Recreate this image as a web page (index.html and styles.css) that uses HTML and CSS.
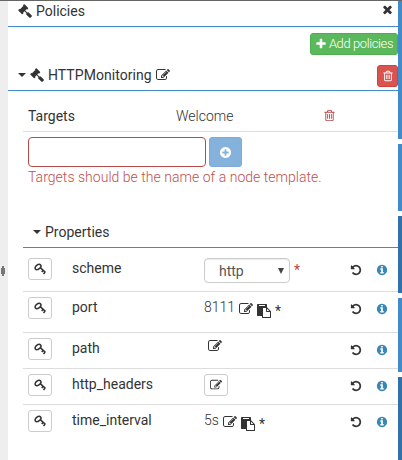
FILE: index.html
```html
<!DOCTYPE html>
<html lang="en">
<head>
<meta charset="utf-8">
<title>Policies</title>
<link rel="stylesheet" href="styles.css">
</head>
<body>
<svg class="defs" aria-hidden="true">
<symbol id="trash" viewBox="0 0 1792 1792"><path d="M704 736v576q0 14-9 23t-23 9h-64q-14 0-23-9t-9-23v-576q0-14 9-23t23-9h64q14 0 23 9t9 23zm256 0v576q0 14-9 23t-23 9h-64q-14 0-23-9t-9-23v-576q0-14 9-23t23-9h64q14 0 23 9t9 23zm256 0v576q0 14-9 23t-23 9h-64q-14 0-23-9t-9-23v-576q0-14 9-23t23-9h64q14 0 23 9t9 23zm128 724v-948h-896v948q0 22 7 40.5t14.5 27 10.5 8.5h832q3 0 10.5-8.5t14.5-27 7-40.5zm-672-1076h448l-48-117q-7-9-17-11h-317q-10 2-17 11zm928 32v64q0 14-9 23t-23 9h-96v948q0 83-47 143.5t-113 60.5h-832q-66 0-113-58.5t-47-141.5v-952h-96q-14 0-23-9t-9-23v-64q0-14 9-23t23-9h309l70-167q15-37 54-63t79-26h320q40 0 79 26t54 63l70 167h309q14 0 23 9t9 23z"/></symbol>
<symbol id="edit" viewBox="0 0 1792 1792"><path d="M888 1184l116-116-152-152-116 116v56h96v96h56zm440-720q-16-16-33 1l-350 350q-17 17-1 33t33-1l350-350q17-17 1-33zm80 594v190q0 119-84.5 203.5t-203.5 84.5h-832q-119 0-203.5-84.5t-84.5-203.5v-832q0-119 84.5-203.5t203.5-84.5h832q63 0 117 25 15 7 18 23 3 17-9 29l-49 49q-14 14-32 8-23-6-45-6h-832q-66 0-113 47t-47 113v832q0 66 47 113t113 47h832q66 0 113-47t47-113v-126q0-13 9-22l64-64q15-15 35-7t20 29zm-96-738l288 288-672 672h-288v-288zm444 132l-92 92-288-288 92-92q28-28 68-28t68 28l152 152q28 28 28 68t-28 68z"/></symbol>
<symbol id="gavel" viewBox="0 0 1792 1792"><path d="M1771 1536q0 53-37 90l-107 108q-39 37-91 37-53 0-90-37l-363-364q-38-36-38-90 0-53 43-96l-256-256-126 126q-14 14-34 14t-34-14q2 2 12.5 12t12.5 13 10 11.5 10 13.5 6 13.5 5.5 16.5 1.5 18q0 38-28 68-3 3-16.5 18t-19 20.5-18.5 16.5-22 15.5-22 9-26 4.5q-40 0-68-28l-408-408q-28-28-28-68 0-13 4.5-26t9-22 15.5-22 16.5-18.5 20.5-19 18-16.5q30-28 68-28 10 0 18 1.5t16.5 5.5 13.5 6 13.5 10 11.5 10 13 12.5 12 12.5q-14-14-14-34t14-34l348-348q14-14 34-14t34 14q-2-2-12.5-12t-12.5-13-10-11.5-10-13.5-6-13.5-5.5-16.5-1.5-18q0-38 28-68 3-3 16.5-18t19-20.5 18.5-16.5 22-15.5 22-9 26-4.5q40 0 68 28l408 408q28 28 28 68 0 13-4.5 26t-9 22-15.5 22-16.5 18.5-20.5 19-18 16.5q-30 28-68 28-10 0-18-1.5t-16.5-5.5-13.5-6-13.5-10-11.5-10-13-12.5-12-12.5q14 14 14 34t-14 34l-126 126 256 256q43-43 96-43 52 0 91 37l363 363q37 39 37 91z"/></symbol>
<symbol id="plus" viewBox="0 0 1792 1792"><path d="M1600 736v192q0 40-28 68t-68 28h-416v416q0 40-28 68t-68 28h-192q-40 0-68-28t-28-68v-416h-416q-40 0-68-28t-28-68v-192q0-40 28-68t68-28h416v-416q0-40 28-68t68-28h192q40 0 68 28t28 68v416h416q40 0 68 28t28 68z"/></symbol>
<symbol id="times" viewBox="0 0 1792 1792"><path d="M1490 1322q0 40-28 68l-136 136q-28 28-68 28t-68-28l-294-294-294 294q-28 28-68 28t-68-28l-136-136q-28-28-28-68t28-68l294-294-294-294q-28-28-28-68t28-68l136-136q28-28 68-28t68 28l294 294 294-294q28-28 68-28t68 28l136 136q28 28 28 68t-28 68l-294 294 294 294q28 28 28 68z"/></symbol>
<symbol id="plus-circle" viewBox="0 0 1792 1792"><path d="M1344 960v-128q0-26-19-45t-45-19h-256v-256q0-26-19-45t-45-19h-128q-26 0-45 19t-19 45v256h-256q-26 0-45 19t-19 45v128q0 26 19 45t45 19h256v256q0 26 19 45t45 19h128q26 0 45-19t19-45v-256h256q26 0 45-19t19-45zm320-64q0 209-103 385.5t-279.5 279.5-385.5 103-385.5-103-279.5-279.5-103-385.5 103-385.5 279.5-279.5 385.5-103 385.5 103 279.5 279.5 103 385.5z"/></symbol>
<symbol id="info" viewBox="0 0 1792 1792"><path d="M1152 1376v-160q0-14-9-23t-23-9h-96v-512q0-14-9-23t-23-9h-320q-14 0-23 9t-9 23v160q0 14 9 23t23 9h96v320h-96q-14 0-23 9t-9 23v160q0 14 9 23t23 9h448q14 0 23-9t9-23zm-128-896v-160q0-14-9-23t-23-9h-192q-14 0-23 9t-9 23v160q0 14 9 23t23 9h192q14 0 23-9t9-23zm640 416q0 209-103 385.5t-279.5 279.5-385.5 103-385.5-103-279.5-279.5-103-385.5 103-385.5 279.5-279.5 385.5-103 385.5 103 279.5 279.5 103 385.5z"/></symbol>
<symbol id="undo" viewBox="0 0 1792 1792"><path d="M1664 896q0 156-61 298t-164 245-245 164-298 61q-172 0-327-72.5t-264-204.5q-7-10-6.5-22.5t8.5-20.5l137-138q10-9 25-9 16 2 23 12 73 95 179 147t225 52q104 0 198.5-40.5t163.5-109.5 109.5-163.5 40.5-198.5-40.5-198.5-109.5-163.5-163.5-109.5-198.5-40.5q-98 0-188 35.5t-160 101.5l137 138q31 30 14 69-17 40-59 40h-448q-26 0-45-19t-19-45v-448q0-42 40-59 39-17 69 14l130 129q107-101 244.5-156.5t284.5-55.5q156 0 298 61t245 164 164 245 61 298z"/></symbol>
<symbol id="paste" viewBox="0 0 1792 1792"><path d="M768 1664h896v-640h-416q-40 0-68-28t-28-68v-416h-384v1152zm256-1440v-64q0-13-9.5-22.5t-22.5-9.5h-704q-13 0-22.5 9.5t-9.5 22.5v64q0 13 9.5 22.5t22.5 9.5h704q13 0 22.5-9.5t9.5-22.5zm256 672h299l-299-299v299zm512 128v672q0 40-28 68t-68 28h-960q-40 0-68-28t-28-68v-160h-544q-40 0-68-28t-28-68v-1344q0-40 28-68t68-28h1088q40 0 68 28t28 68v328q21 13 36 28l408 408q28 28 48 76t20 88z"/></symbol>
<symbol id="key" viewBox="0 0 12 12"><g fill="none" stroke="currentColor"><ellipse cx="4" cy="4" rx="3.3" ry="2.1" transform="rotate(-38 4 4)" stroke-width="1.5"/><path d="M6.2 4.6L11.4 9.4M7.7 9l1.7-1.9M9.5 10.9l1.7-2" stroke-width="1.5"/></g></symbol>
</svg>
<div class="app">
  <div class="gutter"><svg class="grip" viewBox="0 0 6 10"><path d="M2 0h2v10H2zM1 2h4v6H1z"/></svg></div>
  <main class="panel">
    <header class="bar title"><svg class="i"><use href="#gavel"/></svg><span>Policies</span><svg class="i close"><use href="#times"/></svg></header>
    <div class="actions"><button class="btn add"><svg class="i"><use href="#plus"/></svg><span>Add policies</span></button></div>
    <div class="bar policy"><i class="caret"></i><svg class="i"><use href="#gavel"/></svg><span class="pname">HTTPMonitoring</span><svg class="i"><use href="#edit"/></svg><button class="btn del"><svg class="i"><use href="#trash"/></svg></button></div>
    <section class="body">
      <div class="targets"><span class="label">Targets</span><span class="light">Welcome</span><svg class="i red"><use href="#trash"/></svg></div>
      <div class="entry"><input class="field" type="text" aria-label="Target"><button class="btn plus"><svg class="i"><use href="#plus-circle"/></svg></button></div>
      <p class="error">Targets should be the name of a node template.</p>
      <div class="bar props"><i class="caret"></i><span>Properties</span></div>
      <div class="row r1"><button class="btn key"><svg><use href="#key"/></svg></button><span class="name">scheme</span><span class="val"><span class="select"><span>http</span><i class="arrow"></i></span><b class="star req">*</b></span><svg class="i"><use href="#undo"/></svg><svg class="i info"><use href="#info"/></svg></div>
      <div class="row r2"><button class="btn key"><svg><use href="#key"/></svg></button><span class="name">port</span><span class="val"><span class="light">8111</span><svg class="i ed"><use href="#edit"/></svg><svg class="i cp"><use href="#paste"/></svg><b class="star">*</b></span><svg class="i"><use href="#undo"/></svg><svg class="i info"><use href="#info"/></svg></div>
      <div class="row r3"><button class="btn key"><svg><use href="#key"/></svg></button><span class="name">path</span><span class="val"><svg class="i ed lone"><use href="#edit"/></svg></span><svg class="i"><use href="#undo"/></svg><svg class="i info"><use href="#info"/></svg></div>
      <div class="row r4"><button class="btn key"><svg><use href="#key"/></svg></button><span class="name">http_headers</span><span class="val"><button class="btn key"><svg class="pen"><use href="#edit"/></svg></button></span><svg class="i"><use href="#undo"/></svg><svg class="i info"><use href="#info"/></svg></div>
      <div class="row r5"><button class="btn key"><svg><use href="#key"/></svg></button><span class="name">time_interval</span><span class="val"><span class="light">5s</span><svg class="i ed"><use href="#edit"/></svg><svg class="i cp"><use href="#paste"/></svg><b class="star">*</b></span><svg class="i"><use href="#undo"/></svg><svg class="i info"><use href="#info"/></svg></div>
    </section>
  </main>
  <aside class="tabs"><i class="t1"></i><i class="t2"></i><i class="t3 dark"></i><i class="t4"></i><i class="t5 dark"></i></aside>
</div>
</body>
</html>
```
FILE: styles.css
```css
* { box-sizing: border-box; }
body { margin: 0; background: #fff; color: #333; font: 400 14px/20px Roboto, sans-serif; }
.defs { display: none; }
svg { display: block; fill: currentColor; flex: none; }
.app { display: flex; width: 402px; height: 460px; border-top: 1px solid #666; overflow: hidden; }
.gutter { width: 8px; background: #eee; padding-top: 265px; }
.grip { width: 6px; height: 10px; color: #777; }
.panel { width: 390px; }
.i { width: 14px; height: 14px; }
.btn { display: flex; align-items: center; justify-content: center; padding: 0; border: 1px solid #ccc; border-radius: 3px; background: #fff; color: #333; font: inherit; }
.bar { display: flex; align-items: center; border-bottom: 1px solid #428bca; }
.title { height: 26px; padding: 0 4px 6px 10px; gap: 4px; }
.close { width: 13px; height: 13px; margin: -3px 0 0 auto; }
.actions { display: flex; justify-content: flex-end; padding-top: 6px; height: 37px; }
.add { width: 88px; height: 22px; gap: 2px; background: #5cb85c; border-color: #4cae4c; color: #fff; font-size: 13px; letter-spacing: -.4px; font-weight: 300; white-space: nowrap; }
.add .i { width: 12px; height: 12px; }
.policy { height: 27px; padding: 0 0 2px 10px; }
.policy > .i { margin-left: 4px; }
.caret { width: 8px; height: 4px; border: 4px solid transparent; border-top-color: #333; border-bottom: 0; }
.policy .pname { margin: -3px 0 0 4px; letter-spacing: .05px; }
.policy .i { margin-top: -3px; }
.policy .caret { margin-top: -3px; }
.del { width: 21px; height: 22px; margin-left: auto; background: #d9534f; border-color: #d43f3a; color: #fff; }
.policy .del .i { width: 12px; height: 12px; margin: 0; }
.body { padding-left: 15px; }
.targets { display: grid; grid-template-columns: 148px 147px 20px; height: 41px; align-items: center; padding: 9px 0 0 5px; border-bottom: 1px solid #ddd; }
.light { font-weight: 300; }
.red { width: 13px; height: 13px; color: #b94a48; }
.entry { display: flex; gap: 3px; padding: 5px 0 0 5px; }
.field { width: 178px; height: 30px; border: 1px solid #b94a48; border-radius: 4px; padding: 4px; background: #fff; }
.plus { width: 33px; height: 30px; background: #84b2dc; border-color: #7eacd6; color: #fff; }
.plus .i { width: 13px; height: 13px; }
.error { margin: 0 0 0 5px; color: #c0504e; font-weight: 300; letter-spacing: .03px; }
.props { height: 61px; padding: 30px 0 0 10px; gap: 4px; }
.row { display: grid; grid-template-columns: 44px 132px 146px 26px 14px; padding-left: 5px; border-bottom: 1px solid #ddd; align-items: start; }
.r1 { height: 44px; padding-top: 10px; }
.r2 { height: 41px; padding-top: 5px; }
.r3 { height: 36px; padding-top: 5px; }
.r4 { height: 36px; padding-top: 5px; }
.r5 { height: 36px; padding-top: 5px; border-bottom: 0; }
.key { width: 24px; height: 22px; }
.key svg { width: 12px; height: 12px; }
.row > .i { width: 12px; height: 12px; margin-top: 5.5px; }
.row > .info { color: #3887b5; }
.val { display: flex; align-items: flex-start; }
.select { display: flex; align-items: center; justify-content: space-between; width: 86px; height: 25px; border: 1px solid #ccc; border-radius: 4px; padding: 0 5px 0 14px; box-shadow: inset 0 1px 1px rgba(0,0,0,.08); color: #555; }
.arrow { border: 3px solid transparent; border-top: 6px solid #444; border-bottom: 0; }
.star { font-weight: 400; margin: 4px 0 0 3px; }
.star.req { margin: 2px 0 0 4px; color: #b94a48; }
.ed { margin: 5px 0 0 4px; }
.cp { margin: 7px 0 0 4px; }
.cp + .star { margin-left: 4px; }
.lone { margin: 1px 0 0 4px; }
.tabs { width: 4px; }
.tabs i { display: block; background: #428bca; margin-bottom: 5px; }
.tabs .dark { background: #3071a9; }
.t1 { height: 138px; } .t2 { height: 67px; } .t3 { height: 77px; } .t4 { height: 74px; } .t5 { height: 90px; }
```
